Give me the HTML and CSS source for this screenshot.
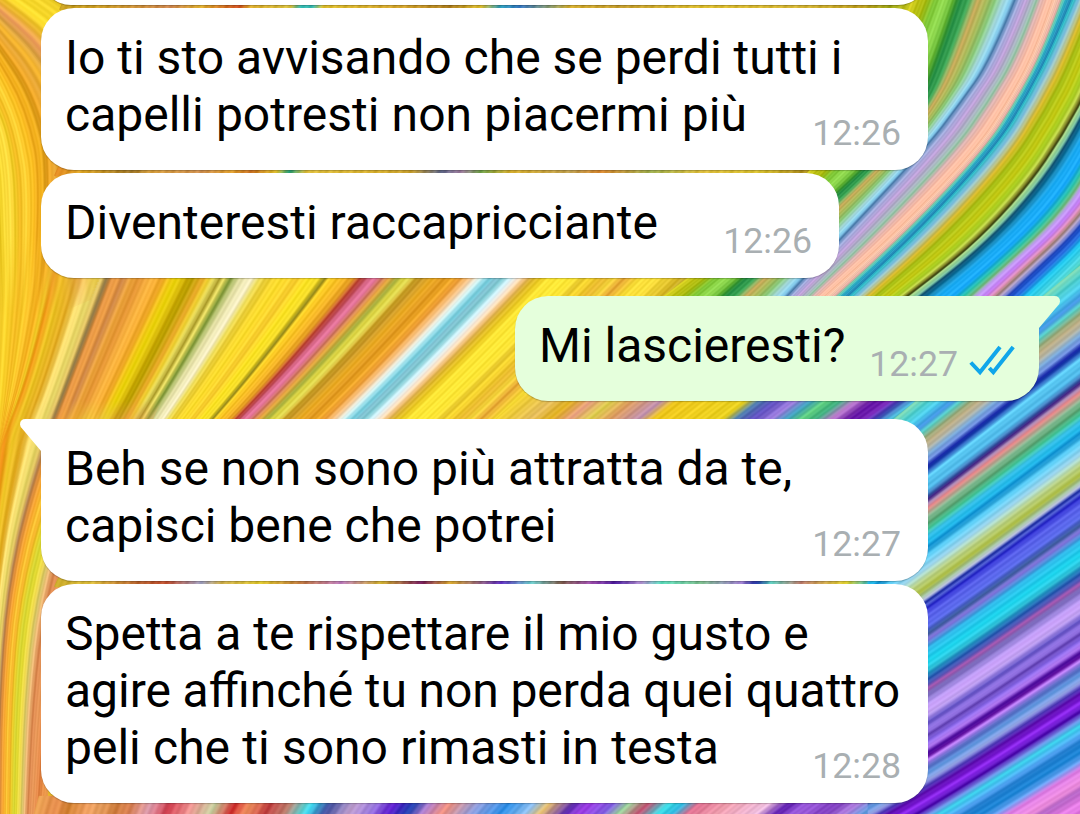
FILE: index.html
```html
<!DOCTYPE html>
<html lang="it">
<head>
<meta charset="utf-8">
<title>Chat</title>
<link rel="stylesheet" href="styles.css">
</head>
<body>
<div class="chat">
  <svg class="wallpaper" viewBox="0 0 1080 814" aria-hidden="true">
    <defs>
      <linearGradient id="fade-down" gradientUnits="userSpaceOnUse" x1="0" y1="235" x2="0" y2="315"><stop offset="0" stop-color="#fff"/><stop offset="1" stop-color="#000"/></linearGradient>
      <linearGradient id="fade-up" gradientUnits="userSpaceOnUse" x1="0" y1="400" x2="0" y2="455"><stop offset="0" stop-color="#000"/><stop offset="1" stop-color="#fff"/></linearGradient>
      <mask id="upper" maskUnits="userSpaceOnUse" x="0" y="0" width="1080" height="814"><rect width="1080" height="814" fill="url(#fade-down)"/></mask>
      <mask id="lower" maskUnits="userSpaceOnUse" x="0" y="0" width="1080" height="814"><rect width="1080" height="814" fill="url(#fade-up)"/></mask>
    </defs>
    <rect width="1080" height="814" fill="#e8b828"/><g id="strands"></g>
  </svg>
  <main class="thread">
    <div class="bubble wide previous"></div>
    <div class="bubble wide">
      <p class="text">Io ti sto avvisando che se perdi tutti i<br><span class="loose">capelli potresti non piacermi più</span></p>
      <div class="meta"><time>12:26</time></div>
    </div>
    <div class="bubble medium">
      <p class="text">Diventeresti raccapricciante</p>
      <div class="meta"><time>12:26</time></div>
    </div>
    <div class="bubble sent">
      <svg class="tail tail-right" viewBox="0 0 22 34"><path d="M0 0H16.500Q22 0 22 5.500Q22 7.500 19.500 10L1 32V34H0Z"/></svg>
      <p class="text">Mi lascieresti?</p>
      <div class="meta"><time>12:27</time>
        <svg class="ticks" viewBox="0 0 46 31"><path d="M1.800 17.500L11 27.300L31 2M20.300 23L24.300 27.300L44.200 2"/></svg>
      </div>
    </div>
    <div class="bubble wide first">
      <svg class="tail tail-left" viewBox="0 0 22 34"><path d="M22 0H5.500Q0 0 0 5.500Q0 7.500 2.500 10L21 32V34H22Z"/></svg>
      <p class="text">Beh se non sono più attratta da te,<br>capisci bene che potrei</p>
      <div class="meta"><time>12:27</time></div>
    </div>
    <div class="bubble wide">
      <p class="text">Spetta a te rispettare il mio gusto e<br><span class="tight">agire affinché tu non perda quei quattro</span><br><span class="loose">peli che ti sono rimasti in testa</span></p>
      <div class="meta"><time>12:28</time></div>
    </div>
  </main>
</div>
<script src="wallpaper.js"></script>
</body>
</html>
```
FILE: styles.css
```css
body {
  margin: 0;
  overflow: hidden;
  font-family: Roboto, "Liberation Sans", sans-serif;
}

.chat {
  position: relative;
  width: 1080px;
  height: 814px;
  overflow: hidden;
}

.wallpaper {
  position: absolute;
  inset: 0;
  width: 1080px;
  height: 814px;
}

#strands {
  fill: none;
  filter: blur(0.7px);
}

.thread {
  position: relative;
  display: flex;
  flex-direction: column;
  align-items: flex-start;
  gap: 3px;
  padding: 0 41px;
}

.bubble {
  position: relative;
  box-sizing: border-box;
  display: grid;
  grid-template-columns: 100%;
  padding: 21px 27px 27px 24px;
  border-radius: 33px;
  background: #fff;
  box-shadow: 0 1px 1px rgba(0, 0, 0, 0.22);
}

.wide {
  width: 887px;
}

.medium {
  width: 798px;
}

.previous {
  height: 60px;
  margin-top: -55px;
}

.sent {
  align-self: flex-end;
  width: 524px;
  margin: 15px 0;
  padding-right: 24px;
  border-top-right-radius: 0;
  background: #e5ffdc;
}

.first {
  border-top-left-radius: 0;
}

.text {
  grid-area: 1 / 1;
  margin: 0;
  font-size: 48px;
  line-height: 57px;
  white-space: nowrap;
  color: #000;
}

.loose {
  word-spacing: 0.35px;
}

.tight {
  word-spacing: -0.35px;
}

.meta {
  grid-area: 1 / 1;
  justify-self: end;
  align-self: end;
  display: flex;
  align-items: flex-end;
  gap: 11px;
  margin-bottom: -11px;
  font-size: 35.7px;
  line-height: 42px;
  color: #a9afb2;
}

.ticks {
  width: 46px;
  height: 31px;
  margin-bottom: 9px;
  fill: none;
  stroke: #10a6ea;
  stroke-width: 4;
}

.tail {
  position: absolute;
  top: 0;
  width: 22px;
  height: 34px;
}

.tail-left {
  left: -21px;
  fill: #fff;
}

.tail-right {
  right: -21px;
  fill: #e5ffdc;
}
```
FILE: wallpaper.js
```js
const layer = document.getElementById('strands');

const rgb = hex => [1, 3, 5].map(i => parseInt(hex.substr(i, 2), 16));
const mix = (a, b, t) => a.map((v, i) => v + (b[i] - v) * t);

// Finds the two neighbours of u in a sorted list and how far u lies between them.
function locate(list, u) {
  let i = 0;
  while (i < list.length - 2 && list[i + 1][0] < u) i++;
  const t = (u - list[i][0]) / (list[i + 1][0] - list[i][0]);
  return [list[i], list[i + 1], Math.max(0, Math.min(1, t))];
}

function parseStops(text) {
  return text.trim().split(/\s+/).map(s => {
    const [u, c] = s.split(':');
    return [parseFloat(u), rgb('#' + c)];
  });
}

// Quadratic curve through the midpoints of the guide points.
function smooth(p) {
  const f = n => n.toFixed(1);
  let d = `M${f(p[0])} ${f(p[1])}`;
  for (let i = 2; i < p.length - 2; i += 2) {
    d += `Q${f(p[i])} ${f(p[i + 1])} ${f((p[i] + p[i + 2]) / 2)} ${f((p[i + 1] + p[i + 3]) / 2)}`;
  }
  return d + `L${f(p[p.length - 2])} ${f(p[p.length - 1])}`;
}

function strands(guides, stopText, step, width, mask) {
  const stops = parseStops(stopText);
  const end = stops[stops.length - 1][0];
  let out = '';
  let n = 0;
  for (let u = stops[0][0]; u <= end; u += step, n++) {
    const [g0, g1, gt] = locate(guides, u);
    const [s0, s1, st] = locate(stops, u);
    const grain = 7 * Math.sin(n * 0.9) + 6 * Math.sin(n * 0.37);
    const c = mix(s0[1], s1[1], st).map(v => Math.round(Math.max(0, Math.min(255, v + grain))));
    out += `<path stroke="rgb(${c})" stroke-width="${width}" d="${smooth(mix(g0[1], g1[1], gt))}"/>`;
  }
  layer.insertAdjacentHTML('beforeend', mask ? `<g mask="url(#${mask})">${out}</g>` : out);
}

// Middle yellow band
strands([
  [-10, [-10, 235, -10, 350, -12, 462]],
  [15, [16, 235, 11, 350, -2, 462]],
  [55, [61, 235, 38, 350, -4, 462]],
  [110, [126, 235, 82, 350, 40, 462]],
  [247, [270, 235, 205, 350, 131, 462]],
  [377, [412, 235, 315, 350, 204, 462]],
  [497, [537, 235, 430, 350, 314, 462]],
  [640, [683, 235, 570, 350, 451, 462]],
  [790, [836, 235, 710, 350, 570, 462]]
], `-10:e8c020 0:e8c020 10:ffd830 22:f0b820 30:ffd030 38:f8bc28 45:f5b020 52:f0cc28 57:f09818 65:f0c828 78:e0a820 88:ffe478
97:e8d868 104:e0c060 108:907848 113:e09040 119:f0a048 125:d08848 133:f0a840 142:e09030 150:ffb848 165:f0a828
172:f0c818 178:f0d810 188:d0b008 195:b89c00 205:f0b030 211:e8c828 217:f0e468 222:a89828 227:f0e468 233:809838
243:e8e4a8 255:f8f0c8 262:f0e060 268:e8cc38 278:f8d830 285:ffe030 300:f8cc30 312:ffe828 322:f0d828
328:988c20 332:ffd428 345:f8bc28 356:e8a028 363:b84030 372:d06080 379:f080a8 385:c87058 392:f0b048 400:a0a838
406:e0d848 412:e8e058 418:c8a028 425:c89828 435:f0b028 445:e09820 454:f0a828 462:f0a038 472:f8c890 479:f0f4e8
487:a0e4f0 493:70c8d8 497:80c0d0 505:88d0d8 513:e0f8ff 520:ffe8d0 527:f0c078 535:d8b028 543:f0d028 552:ffe838
575:ffe838 584:e8c830 590:f8d830 605:e8b830 615:f8d840 625:e8a838 640:f8dc38 655:ffe440 680:d8b828 700:a89838
715:c8a8a0 730:c8b458 745:b0a448 765:d0c038 790:b09880`, 0.8, 2.4);

// Upper left swirl
strands([
  [0, [0, 320, -5, 200, -10, 150, -20, 100]],
  [1, [13, 320, 14, 210, 8, 140, -8, 100]],
  [2, [26, 320, 35, 200, 22, 120, -8, 60]],
  [3, [42, 320, 56, 170, 36, 90, -8, 30]],
  [4, [90, 300, 85, 100, 50, 40, -8, -5]],
  [5, [140, 180, 110, 50, 70, 10, 20, -20]]
], `0:e8c020 0.4:f0d028 0.7:ffe040 1:ffdc40 1.2:f0cc28 1.45:f0b820 1.65:ffd438 1.95:ffcc30 2.2:f8bc20 2.4:f0ac20
2.6:f5b420 2.8:d89818 3:f0a828 3.2:e8a838 3.4:f8b830 3.6:d8a040 3.8:f0a060 4:e8b030 4.3:ffe030 5:f0d028`, 0.025, 2.4, 'upper');

// Lower left fan
strands([
  [0, [2, 395, -10, 500, -15, 600, -15, 700, -15, 820]],
  [1, [56, 395, 25, 490, 5, 590, -3, 700, -4, 820]],
  [2, [88, 395, 48, 500, 22, 600, 14, 700, 12, 820]],
  [3, [125, 395, 75, 500, 45, 600, 33, 700, 28, 820]],
  [4, [165, 395, 110, 500, 75, 600, 55, 700, 45, 820]]
], `0:f0c028 0.07:f0b420 0.18:f09018 0.36:f0c828 0.58:e0a820 0.76:ffe478 0.93:e8d868 1.06:e0c060 1.17:b08050
1.3:e09040 1.5:f8a830 1.7:ffc838 1.85:f0b028 2:f0d430 2.15:d0d030 2.3:e8e038 2.5:f0d850 2.65:d8c868 2.85:f0b878 3.05:d8844c
3.3:f0a060 3.6:e08040 4:f0a050`, 0.02, 2.4, 'lower');

// Strip between the sent bubble and the reply
const shallow = [[500, [520, 395, 482, 428]], [1000, [1020, 395, 972, 428]]];
strands(shallow, `505:f0d030 540:e8c060 560:e0b020 580:e8a080 600:e0d050 620:e0a060 650:c090b0 665:f0c820
700:f0d020 735:e8d020 748:5080b0 765:6050c0 785:a080e0 800:40a0c0 815:60d080 830:40b080 845:c080d0 865:6010a0
880:8030c0 890:4040b0 905:50c0e0 925:80e090 950:60c0a0`, 1, 2.4);

// Bottom edge
strands([[30, [34, 796, 28, 818]], [400, [406, 796, 390, 818]], [950, [962, 796, 928, 818]]],
`36:e8a050 55:e89050 70:d08030 85:f0a060 100:e8a060 115:d08040 130:d88050 150:e0a0b0 170:d04050 190:f09090
215:c8d0a0 235:d03030 250:f09060 270:c04040 290:c08070 306:60d0d0 313:40d8f0 330:4050a0 355:c0a0d0 375:a080e0
395:6020d0 415:2040b0 430:b080d0 450:f09080 480:90a0e0 510:3090e8 535:90c0f0 550:e8c070 575:6030b0 590:a040e8
615:8060e0 630:a0d8a0 650:c05070 670:40e0e8 685:30b8e0 700:e07090 730:f0a0b0 770:f0c0e0 790:6020b0 810:a060e0
840:8040c0 860:b080e0 880:60a0e0 900:4010a0 930:7020d0`, 1, 2.4);

// Thin gaps between stacked bubbles
const row = (y0, y1) => [[40, [44, y0, 40, y1]], [960, [964, y0, 960, y1]]];
strands(row(1, 10), `60:c8a020 100:d0a028 170:d08850 200:e0b030 238:d05020 250:e0b030 290:d8c040 300:30b8b0
312:40c0b8 322:e0c030 400:d8a830 450:b08020 480:e0c030 500:30a0c0 520:3878c0 550:90a070 570:d8b030 620:c8a030
700:e0c030 800:d8b838 860:c0a020 890:a0a818 910:c8c820`, 1, 2);
strands(row(167, 176), `55:e08820 80:e0a828 130:a07828 150:d8a040 200:d09050 230:e0a030 250:c87020 275:e0c030
288:28a078 305:e0c040 380:d8b030 410:c8a030 440:606888 460:a080a0 480:70a048 510:d8b030 570:c0a050 600:d88830
650:a0b050 700:e0c040 760:d8c030 800:b09020 840:c8c020`, 1, 2);
strands(row(578, 587), `55:c8a828 90:e0c040 140:b86030 165:c05030 200:a0a0c0 220:d0b050 260:e0c830 300:c07840
340:c080c0 380:d0b030 420:7a2060 450:d8a830 500:6030c0 530:70d0d0 560:806050 590:a050b0 615:5020a0 640:b090d0
660:60e0c0 700:80c090 740:a080d0 755:2030a0 770:60d0c0 800:c08070 845:e0d030 870:30b8c8 925:60c0e0`, 1, 2);

// Upper right arc
strands([
  [-2, [915, -5, 885, 70, 860, 115, 830, 150, 760, 225, 660, 300]],
  [-1, [960, -5, 935, 70, 915, 115, 885, 150, 815, 215, 720, 300]],
  [0, [1018, -5, 992, 60, 960, 105, 928, 147, 839, 242, 785, 300]],
  [1, [1055, -5, 1037, 50, 1007, 105, 975, 152, 900, 230, 822, 300]],
  [2, [1078, -5, 1057, 45, 1032, 95, 1002, 145, 925, 230, 850, 300]],
  [3, [1122, -5, 1093, 80, 1064, 134, 1028, 187, 972, 247, 898, 304]],
  [4, [1200, -5, 1130, 100, 1090, 185, 1060, 225, 1020, 262, 970, 308]],
  [5, [1260, 0, 1200, 100, 1150, 180, 1090, 250, 1065, 275, 1030, 308]],
  [6, [1320, 0, 1270, 100, 1220, 180, 1150, 260, 1120, 280, 1090, 315]]
], `-2:d8d020 -1.7:a8b810 -1.5:80c838 -1.25:98e058 -1.1:60b030 -0.95:208840 -0.8:48b060 -0.65:d0b060
-0.5:a8b858 -0.35:88c878 -0.2:a8dce0 -0.08:88d0f0 0:5080b0 0.12:a8b0e0 0.3:c0a0d8 0.48:a8b8c0 0.58:98c8a8
0.68:d8b0b0 0.85:ffc0a8 1:ffc0a0 1.2:f8c8b0 1.35:e0a8a0 1.45:70d0b0 1.6:30b0c8 1.8:2888b8 1.95:30c0c8 2.08:80c0e0
2.18:b8c8a0 2.3:d8b828 2.45:a8c018 2.65:c8cc18 2.8:a8cc20 2.9:c8dc50 2.97:686818 3.01:404818 3.04:b0e090
3.12:80c8a0 3.18:105070 3.3:1888b8 3.42:20b0f8 3.62:18a8f8 3.75:28c0a8 3.85:78c080 3.92:c0a0f0 4.05:c880f8
4.17:e090b8 4.24:a08078 4.32:b8a8d0 4.45:2048c0 4.6:2870e0 4.75:20c8f0 5:50d8e0 5.2:58d8b0 5.5:88dca0 6:60d8c8`, 0.012, 2.2);

// Lower right rays, indexed by their height at x = 928
strands([
  [380, [868, 430, 928, 380, 1090, 245]],
  [467, [868, 514, 928, 467, 1090, 342]],
  [608, [868, 649, 928, 608, 1090, 490]],
  [800, [868, 833, 928, 800, 1090, 696]],
  [970, [868, 1000, 928, 970, 1090, 876]]
], `392:80d8b0 402:50d0d0 412:50d0f0 422:4090e0 428:60d8d0 436:90a070 442:c8b890 448:b0b0a0 455:80b0e0 461:7090e0
466:1020a0 471:3060c0 477:60d0f8 490:50b8e8 496:4068b0 500:402080 504:a080b0 509:f09090 518:80b890 524:60a878
530:40c090 537:40c8f0 543:20b8e8 548:1090d0 557:60d0f8 568:a0d8f0 578:c0d890 588:a8b840 594:a8c8a0 598:c0c8e0
602:1a2aa0 605:5868d8 609:2828c8 617:6068f0 628:5868e8 635:4060a0 641:8070d8 650:30b8e8 663:20d8f0 672:30c0d8
681:2050a8 686:6060c0 690:a858b0 695:7060b0 702:a890e8 709:c8a0f8 716:c8a8f8 724:6050c0 731:a080f0 737:6040b0
743:9070f0 749:b078f0 755:5010a0 758:6010a0 762:c080f8 768:6070c8 775:5890d8 782:a0b0f0 788:4830b0 793:6010b0
802:9028f0 810:5010b0 816:7080e0 823:40d8f0 833:50a0f0 841:1878c8 848:2088d8 856:60a0f0 864:e080e8 878:f090e0
884:b060c0 895:e880e8 930:d060d0`, 0.8, 2);
```
